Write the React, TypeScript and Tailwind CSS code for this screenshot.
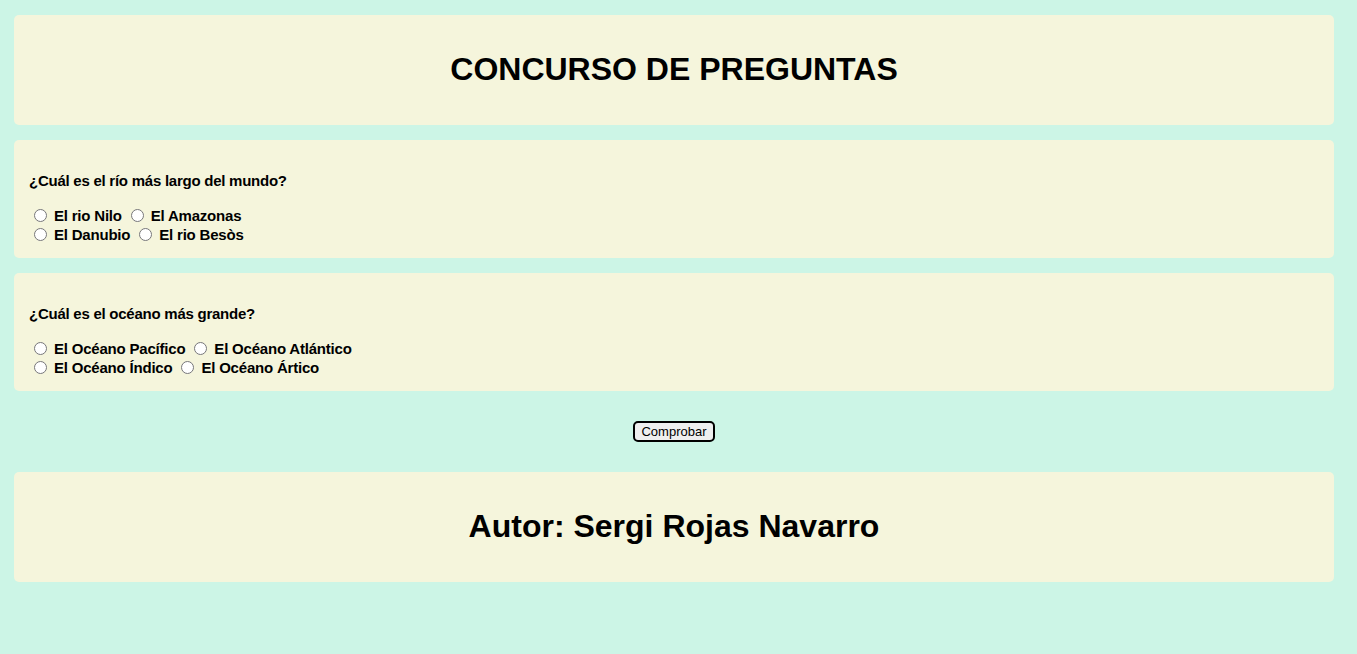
import React from "react";

const font = { fontFamily: '"Liberation Sans", Arial, sans-serif' };

function Question({ q, opts }: { q: string; opts: [string, string][] }) {
  return (
    <div className="bg-[#f5f5dc] rounded-[5px] px-[15px] pt-[32px] pb-[14px]">
      <p className="text-[15px] leading-[17px] font-bold text-black tracking-[-0.25px]">{q}</p>
      <div className="mt-[17px] text-[15px] leading-[19px] font-bold text-black tracking-[-0.2px]">
        {opts.map((row, i) => (
          <div key={i}>
            <input type="radio" name={q} className="ml-[5px] mr-[3px] mt-[3px] align-[-1px] w-[13px] h-[13px]" />{" "}
            <label>{row[0]}</label>{" "}
            <input type="radio" name={q} className="ml-[5px] mr-[3px] mt-[3px] align-[-1px] w-[13px] h-[13px]" />{" "}
            <label>{row[1]}</label>
          </div>
        ))}
      </div>
    </div>
  );
}

export default function App() {
  return (
    <div className="min-h-[654px] bg-[#ccf5e6] pt-[15px]" style={font}>
      <div className="ml-[14px] w-[1320px] flex flex-col">
        <div className="bg-[#f5f5dc] rounded-[5px] h-[110px] flex items-center justify-center">
          <h1 className="text-[32px] font-bold text-black leading-[37px] -mt-[2px]">CONCURSO DE PREGUNTAS</h1>
        </div>
        <div className="mt-[15px]">
          <Question
            q="¿Cuál es el río más largo del mundo?"
            opts={[
              ["El rio Nilo", "El Amazonas"],
              ["El Danubio", "El rio Besòs"],
            ]}
          />
        </div>
        <div className="mt-[15px]">
          <Question
            q="¿Cuál es el océano más grande?"
            opts={[
              ["El Océano Pacífico", "El Océano Atlántico"],
              ["El Océano Índico", "El Océano Ártico"],
            ]}
          />
        </div>
        <div className="flex justify-center mt-[30px]">
          <button className="h-[21px] w-[82px] border-2 border-black rounded-[5px] bg-[#efefef] text-[13px] leading-[16px] text-black">
            Comprobar
          </button>
        </div>
        <div className="mt-[30px] bg-[#f5f5dc] rounded-[5px] h-[110px] flex items-center justify-center">
          <h2 className="text-[32px] font-bold text-black leading-[37px] -mt-[2px]">Autor: Sergi Rojas Navarro</h2>
        </div>
      </div>
    </div>
  );
}
